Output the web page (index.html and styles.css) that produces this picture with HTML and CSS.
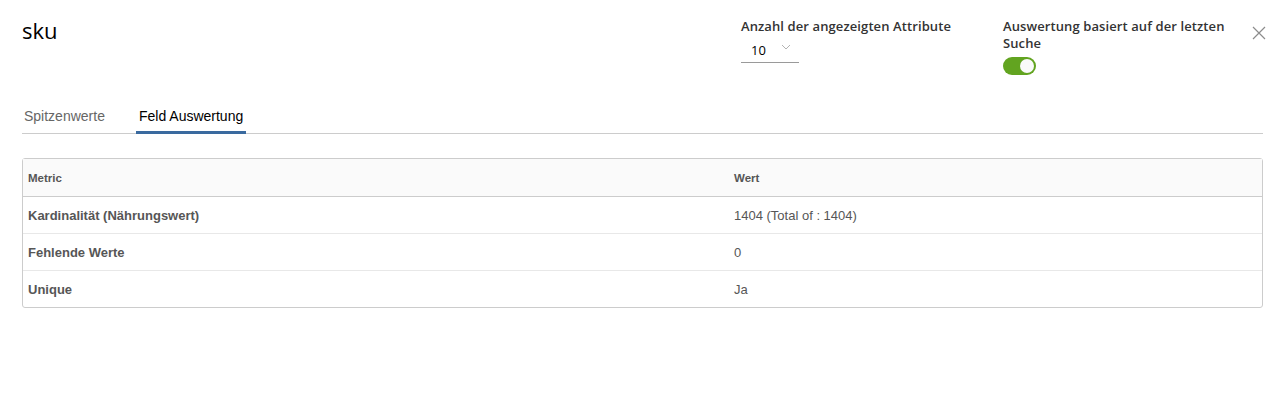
FILE: index.html
```html
<!DOCTYPE html>
<html lang="de">
<head>
<meta charset="UTF-8">
<meta name="viewport" content="width=device-width, initial-scale=1.0">
<title>sku</title>
<link rel="stylesheet" href="styles.css">
</head>
<body>
    <div class="panel">
        <div class="header">
            <h2 class="title">sku</h2>
            <div class="controls">
                <div class="control count">
                    <label for="count">Anzahl der angezeigten Attribute</label>
                    <div class="select">
                        <span>10</span>
                        <svg width="10" height="6" viewBox="0 0 10 6"><path d="M1 1l4 4 4-4" fill="none" stroke="#b3b3b3" stroke-width="1"/></svg>
                    </div>
                </div>
                <div class="control last-search">
                    <label>Auswertung basiert auf der letzten Suche</label>
                    <div class="toggle"><span class="knob"></span></div>
                </div>
                <button class="close" aria-label="Schließen">
                    <svg width="14" height="14" viewBox="0 0 14 14"><path d="M1 1l12 12M13 1L1 13" stroke="#8c8c8c" stroke-width="1.2" fill="none"/></svg>
                </button>
            </div>
        </div>

        <ul class="tabs">
            <li class="tab">Spitzenwerte</li>
            <li class="tab active">Feld Auswertung</li>
        </ul>

        <table class="grid">
            <thead>
                <tr><th class="col-metric">Metric</th><th>Wert</th></tr>
            </thead>
            <tbody>
                <tr><td class="col-metric">Kardinalität (Nährungswert)</td><td>1404 (Total of : 1404)</td></tr>
                <tr><td class="col-metric">Fehlende Werte</td><td>0</td></tr>
                <tr><td class="col-metric">Unique</td><td>Ja</td></tr>
            </tbody>
        </table>
    </div>
</body>
</html>
```

FILE: styles.css
```css
body {
    margin: 0;
    font-family: "Open Sans", sans-serif;
    color: #333;
    background: #fff;
}
.panel {
    padding: 16px 24px 0 22px;
}
.header {
    display: flex;
    justify-content: space-between;
    align-items: flex-start;
    height: 92px;
    margin-right: -3px;
}
.title {
    margin: 0;
    font-size: 22px;
    font-weight: 400;
    color: #000;
    line-height: 28px;
}
.controls {
    display: flex;
    align-items: flex-start;
}
.control label {
    display: block;
    font-size: 13px;
    font-weight: 600;
    color: #333;
    line-height: 17px;
    margin-top: 2px;
    letter-spacing: 0.1px;
}
.count {
    width: 262px;
}
.select {
    display: flex;
    align-items: center;
    justify-content: space-between;
    width: 58px;
    box-sizing: border-box;
    margin-top: 4px;
    padding: 2px 8px 3px 10px;
    border-bottom: 1px solid #9a9a9a;
    font-size: 13px;
    color: #000;
    line-height: 18px;
}
.select svg {
    margin-top: -6px;
}
.last-search {
    width: 232px;
}
.toggle {
    margin-top: 5px;
    width: 33px;
    height: 18px;
    border-radius: 9px;
    background: #62a420;
    position: relative;
}
.knob {
    position: absolute;
    right: 2px;
    top: 2px;
    width: 14px;
    height: 14px;
    border-radius: 50%;
    background: #fafafa;
}
.close {
    border: none;
    background: none;
    padding: 0;
    margin-top: 10px;
    margin-left: 17px;
    cursor: pointer;
}
.tabs {
    list-style: none;
    margin: 0;
    padding: 0;
    display: flex;
    border-bottom: 1px solid #ccc;
    font-family: "Liberation Sans", Arial, sans-serif;
    font-size: 14px;
}
.tab {
    padding: 0 0 6px;
    line-height: 17px;
    color: #666;
    border-bottom: 3px solid transparent;
    margin-bottom: -1px;
}
.tab:first-child {
    margin-left: 2px;
    margin-right: 31px;
}
.tab.active {
    color: #000;
    border-bottom-color: #3a6a9f;
    padding: 0 3px 6px;
}
.grid {
    margin-top: 24px;
    width: 100%;
    border-collapse: separate;
    border-spacing: 0;
    border: 1px solid #ccc;
    border-radius: 3px;
    font-family: "Liberation Sans", Arial, sans-serif;
    color: #565656;
}
.grid th {
    text-align: left;
    font-size: 11.5px;
    font-weight: 700;
    background: #fafafa;
    height: 37px;
    padding: 0 5px;
    border-bottom: 1px solid #ccc;
}
.grid td {
    font-size: 13px;
    height: 36px;
    padding: 0 5px;
    border-bottom: 1px solid #e8e8e8;
}
.grid tbody tr:last-child td {
    border-bottom: none;
}
.grid .col-metric {
    width: 696px;
    font-weight: 700;
}
```
